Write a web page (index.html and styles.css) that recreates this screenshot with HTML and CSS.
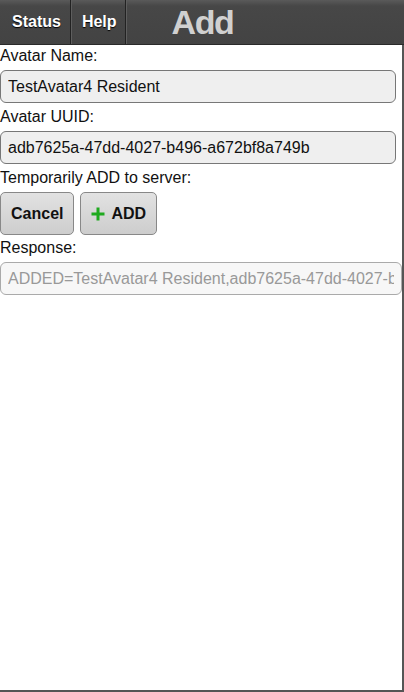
FILE: index.html
```html
<!DOCTYPE html>
<html lang="en">
<head>
    <meta charset="UTF-8">
    <meta name="viewport" content="width=device-width, initial-scale=1.0">
    <title>Add</title>
    <link rel="stylesheet" href="styles.css">
</head>
<body>
    <div class="page">
        <div class="header">
            <button class="nav-btn">Status</button>
            <button class="nav-btn">Help</button>
            <h1 class="title">Add</h1>
        </div>

        <div class="content">
            <label for="name">Avatar Name:</label>
            <input type="text" id="name" class="field" value="TestAvatar4 Resident">

            <label for="uuid">Avatar UUID:</label>
            <input type="text" id="uuid" class="field" value="adb7625a-47dd-4027-b496-a672bf8a749b">

            <label>Temporarily ADD to server:</label>
            <div class="actions">
                <button class="btn">Cancel</button>
                <button class="btn">
                    <svg class="plus" width="14" height="14" viewBox="0 0 14 14">
                        <path d="M7 0.5v13M0.5 7h13" stroke="#1faa1f" stroke-width="3"/>
                    </svg>
                    ADD
                </button>
            </div>

            <label for="response">Response:</label>
            <input type="text" id="response" class="field response" value="ADDED=TestAvatar4 Resident,adb7625a-47dd-4027-b496-a672bf8a749b" readonly>
        </div>
    </div>
</body>
</html>
```

FILE: styles.css
```css
* {
    box-sizing: border-box;
    margin: 0;
    padding: 0;
    font-family: "Liberation Sans", Arial, sans-serif;
}

body {
    background: #fff;
}

.page {
    width: 404px;
    height: 692px;
    border-right: 2px solid #555;
    border-bottom: 2px solid #555;
    display: flex;
    flex-direction: column;
}

.header {
    display: flex;
    height: 45px;
    background: linear-gradient(#5a5a5a, #474747 6px, #434343);
    border-bottom: 1px solid #2a2a2a;
    margin-right: -2px;
}

.nav-btn {
    background: transparent;
    border: none;
    border-right: 1px solid #222;
    box-shadow: 1px 0 0 #5e5e5e;
    color: #fff;
    font-size: 16px;
    font-weight: bold;
    text-shadow: 0 1px 1px #000;
    padding: 0 9px 0 12px;
    height: 44px;
}

.nav-btn + .nav-btn {
    padding: 0 8px 0 11px;
}

.title {
    flex: 1;
    color: #d0d0d0;
    font-size: 34px;
    letter-spacing: -1.5px;
    font-weight: bold;
    line-height: 44px;
    padding-left: 46px;
}

.content {
    display: flex;
    flex-direction: column;
    padding-top: 1px;
}

label {
    font-size: 16px;
    color: #111;
    line-height: 19px;
    margin-bottom: 5px;
}

.field {
    width: 396px;
    height: 33px;
    border: 1px solid #777;
    border-radius: 6px;
    background: #efefef;
    font-size: 16px;
    color: #111;
    padding: 0 7px;
    margin-bottom: 4px;
}

.response {
    width: 402px;
    background: #f7f7f7;
    border-color: #aaa;
    color: #999;
}

.actions {
    display: flex;
    gap: 6px;
    margin-bottom: 3px;
}

.btn {
    display: flex;
    align-items: center;
    gap: 6px;
    height: 43px;
    padding: 0 10px;
    border: 1px solid #888;
    border-radius: 5px;
    background: linear-gradient(#e2e2e2, #cdcdcd);
    font-size: 16px;
    font-weight: bold;
    color: #111;
}
```
